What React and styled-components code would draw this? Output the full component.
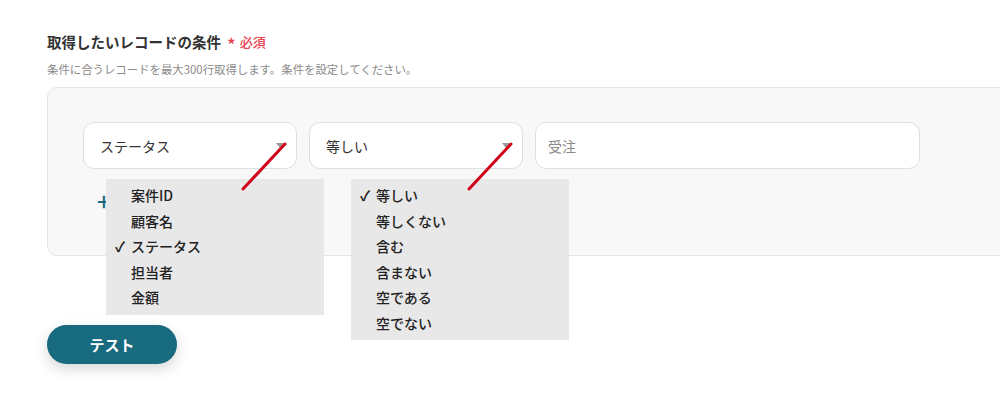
import React from 'react';
import styled, {createGlobalStyle, css} from 'styled-components';

const GlobalStyle = createGlobalStyle`
  body {
    margin: 0;
    background: #fff;
    font-family: "Noto Sans CJK JP", "Noto Sans", sans-serif;
    overflow: hidden;
  }
`;

const Page = styled.div`
  width: 1000px;
  height: 398px;
  padding: 33px 0 0 47px;
  box-sizing: border-box;
  overflow: hidden;
`;

const Title = styled.div`
  display: flex;
  align-items: center;
  gap: 4px;
  height: 18px;
  font-size: 14.5px;
  font-weight: 700;
  color: #333;
  line-height: 18px;
`;

const Required = styled.span`
  display: flex;
  align-items: center;
  gap: 4px;
  color: #e8414f;
  font-size: 13px;
  font-weight: 500;
  margin-left: 2px;
`;

const Star = styled.span`
  font-size: 18px;
  line-height: 18px;
  padding-top: 4px;
`;

const Hint = styled.div`
  margin-top: 11px;
  font-size: 11.4px;
  color: #8a8a8a;
  line-height: 14px;
`;

const Panel = styled.div`
  margin-top: 11px;
  width: 990px;
  height: 169px;
  box-sizing: border-box;
  padding: 34px 0 0 35px;
  background: #f8f8f9;
  border: 1px solid #e2e5e9;
  border-radius: 10px;
`;

const Row = styled.div`
  display: flex;
  gap: 12px;
`;

const Field = styled.div`
  position: relative;
  width: ${p => p.width}px;
  height: 47px;
  box-sizing: border-box;
  display: flex;
  align-items: center;
  padding-left: ${p => (p.input ? 12 : 16)}px;
  background: #fff;
  border: 1px solid #dcdfe4;
  border-radius: 11px;
  font-size: 14px;
  color: ${p => (p.input ? '#8a8a8a' : '#333')};
`;

const Caret = styled.span`
  position: absolute;
  right: 12px;
  top: 20px;
  width: 0;
  height: 0;
  border-left: 4px solid transparent;
  border-right: 4px solid transparent;
  border-top: 5px solid #9a9a9a;
`;

const Menu = styled.ul`
  position: absolute;
  left: ${p => p.left}px;
  top: 56px;
  width: 218px;
  margin: 0;
  padding: 4px 0;
  list-style: none;
  background: #e8e8e8;
  z-index: 2;
`;

const MenuItem = styled.li`
  position: relative;
  height: 25.5px;
  line-height: 25.5px;
  padding-left: 25px;
  font-size: 14px;
  font-weight: 500;
  color: #222;
  ${p => p.checked && css`
    &::before {
      content: '✓';
      position: absolute;
      left: 9px;
      font-weight: 700;
    }
  `}
`;

const Marker = styled.svg`
  position: absolute;
  left: 150px;
  top: 14px;
  z-index: 3;
  overflow: visible;
`;

const AddRow = styled.div`
  margin-top: 24px;
  margin-left: 14px;
  display: flex;
  align-items: center;
  color: #1b6a80;
`;

const Plus = styled.span`
  font-size: 24px;
  font-weight: 500;
  line-height: 16px;
`;

const TestButton = styled.button`
  margin-top: 69px;
  width: 130px;
  height: 39px;
  border: none;
  border-radius: 20px;
  background: #186a7f;
  color: #fff;
  font-family: inherit;
  font-size: 15px;
  font-weight: 700;
  box-shadow: 0 5px 14px rgba(0, 0, 0, 0.16);
`;

function RedMark() {
  return (
    <Marker width="60" height="60">
      <line x1="51" y1="7" x2="9" y2="52" stroke="#d0021b" strokeWidth="3" strokeLinecap="round" />
    </Marker>
  );
}

const fields = ['案件ID', '顧客名', 'ステータス', '担当者', '金額'];
const operators = ['等しい', '等しくない', '含む', '含まない', '空である', '空でない'];

export default function App() {
  return (
    <Page>
      <GlobalStyle />
      <Title>
        取得したいレコードの条件
        <Required><Star>*</Star>必須</Required>
      </Title>
      <Hint>条件に合うレコードを最大300行取得します。条件を設定してください。</Hint>
      <Panel>
        <Row>
          <Field width={214}>
            ステータス
            <Caret />
            <RedMark />
            <Menu left={22}>
              {fields.map(f => (
                <MenuItem key={f} checked={f === 'ステータス'}>{f}</MenuItem>
              ))}
            </Menu>
          </Field>
          <Field width={214}>
            等しい
            <Caret />
            <RedMark />
            <Menu left={41}>
              {operators.map(o => (
                <MenuItem key={o} checked={o === '等しい'}>{o}</MenuItem>
              ))}
            </Menu>
          </Field>
          <Field width={385} input>受注</Field>
        </Row>
        <AddRow aria-label="条件を追加">
          <Plus>+</Plus>
        </AddRow>
      </Panel>
      <TestButton>テスト</TestButton>
    </Page>
  );
}
